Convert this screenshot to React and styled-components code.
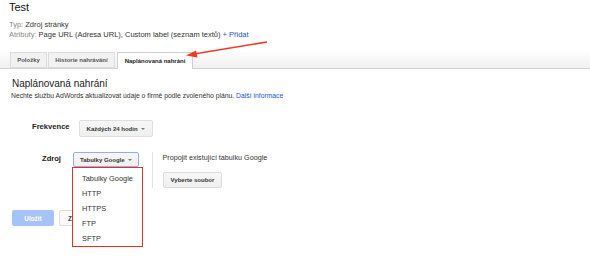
import React from "react";
import styled, { createGlobalStyle } from "styled-components";

const GlobalStyle = createGlobalStyle`
  body {
    margin: 0;
    background: #fff;
    font-family: "Liberation Sans", Arial, sans-serif;
    color: #222;
  }
`;

const tabs = [
  { label: "Položky", width: 37, active: false },
  { label: "Historie nahrávání", width: 67, active: false },
  { label: "Naplánovaná nahrání", width: 76, active: true },
];

const sources = ["Tabulky Google", "HTTP", "HTTPS", "FTP", "SFTP"];

const App = () => {
  return (
    <Page>
      <GlobalStyle />
      <Header>
        <Title>Test</Title>
        <Meta>
          <MetaKey>Typ:</MetaKey> Zdroj stránky
        </Meta>
        <Meta>
          <MetaKey>Atributy:</MetaKey> Page URL (Adresa URL), Custom label
          (seznam textů) <BlueLink>+ Přidat</BlueLink>
        </Meta>
      </Header>

      <TabBar>
        {tabs.map((tab) => (
          <Tab key={tab.label} $active={tab.active} $width={tab.width}>
            {tab.label}
          </Tab>
        ))}
      </TabBar>

      <Content>
        <Heading>Naplánovaná nahrání</Heading>
        <Description>
          Nechte službu AdWords aktualizovat údaje o firmě podle zvoleného
          plánu. <BlueLink>Další informace</BlueLink>
        </Description>

        <FormRow $top={20}>
          <Label $indent={21} $gap={9}>
            Frekvence
          </Label>
          <SelectButton>
            Každých 24 hodin <Caret />
          </SelectButton>
        </FormRow>

        <FormRow $top={15}>
          <Label $indent={31} $gap={12}>
            Zdroj
          </Label>
          <SelectWrap>
            <SelectButton $open>
              Tabulky Google <Caret />
            </SelectButton>
            <Menu>
              {sources.map((s) => (
                <MenuItem key={s}>{s}</MenuItem>
              ))}
            </Menu>
          </SelectWrap>
          <Separator />
          <SidePanel>
            <SideText>Propojit existující tabulku Google</SideText>
            <GrayButton>Vyberte soubor</GrayButton>
          </SidePanel>
        </FormRow>

        <Actions>
          <SaveButton>Uložit</SaveButton>
          <CancelButton>Zrušit</CancelButton>
        </Actions>
      </Content>

      <Arrow width="590" height="276" viewBox="0 0 590 276">
        <line
          x1="267"
          y1="42"
          x2="194"
          y2="54"
          stroke="#f03a26"
          strokeWidth="1.6"
        />
        <polygon points="186,55.5 196,50.5 197.5,57.5" fill="#f03a26" />
      </Arrow>
    </Page>
  );
};

export default App;

const Page = styled.div`
  position: relative;
  width: 590px;
  height: 276px;
  overflow: hidden;
`;

const Header = styled.div`
  padding: 0 9px;
`;

const Title = styled.div`
  font-size: 11px;
  line-height: 14px;
  color: #111;
  margin-bottom: 6px;
`;

const Meta = styled.div`
  font-size: 7.5px;
  line-height: 10px;
  color: #333;
  white-space: nowrap;
`;

const MetaKey = styled.span`
  color: #888;
`;

const BlueLink = styled.span`
  color: #2255cc;
`;

const TabBar = styled.div`
  margin-top: 10px;
  height: 18px;
  display: flex;
  align-items: flex-end;
  gap: 1px;
  padding-left: 10px;
  background: linear-gradient(#ffffff, #f0f0f0);
  border-bottom: 1px solid #d2d2d2;
`;

const Tab = styled.div`
  width: ${(p) => p.$width}px;
  height: ${(p) => (p.$active ? "17px" : "16px")};
  margin-bottom: ${(p) => (p.$active ? "-1px" : "0")};
  margin-left: ${(p) => (p.$active ? "1px" : "0")};
  box-sizing: border-box;
  display: flex;
  align-items: center;
  justify-content: center;
  font-size: 6px;
  font-weight: bold;
  white-space: nowrap;
  color: ${(p) => (p.$active ? "#222" : "#555")};
  background: ${(p) => (p.$active ? "#fff" : "#f1f1f1")};
  border: 1px solid ${(p) => (p.$active ? "#cfcfcf" : "#dcdcdc")};
  border-bottom: ${(p) => (p.$active ? "none" : "1px solid #dcdcdc")};
`;

const Content = styled.div`
  padding: 8px 11px 0;
`;

const Heading = styled.div`
  font-size: 10px;
  line-height: 13px;
  color: #222;
  margin-bottom: 1px;
  padding-left: 1px;
`;

const Description = styled.div`
  font-size: 6.8px;
  line-height: 9px;
  color: #333;
  white-space: nowrap;
`;

const FormRow = styled.div`
  display: flex;
  align-items: flex-start;
  margin-top: ${(p) => p.$top}px;
`;

const Label = styled.div`
  padding-left: ${(p) => p.$indent}px;
  margin-right: ${(p) => p.$gap}px;
  font-size: 7.6px;
  font-weight: bold;
  line-height: 11px;
  padding-top: 1px;
  color: #222;
`;

const SelectWrap = styled.div`
  position: relative;
`;

const SelectButton = styled.div`
  height: ${(p) => (p.$open ? "15px" : "17px")};
  box-sizing: border-box;
  display: flex;
  align-items: center;
  gap: 3px;
  padding: 0 ${(p) => (p.$open ? "6px" : "7px")};
  font-size: 6px;
  font-weight: bold;
  color: #333;
  background: linear-gradient(#f7f7f7, #efefef);
  border: 1px solid ${(p) => (p.$open ? "#8fb0f0" : "#dedede")};
  border-radius: 2px;
  white-space: nowrap;
`;

const Caret = styled.span`
  width: 0;
  height: 0;
  border-left: 2px solid transparent;
  border-right: 2px solid transparent;
  border-top: 2px solid #777;
`;

const Menu = styled.div`
  position: absolute;
  left: -1px;
  top: 15px;
  width: 71px;
  height: 80px;
  box-sizing: border-box;
  border: 1.5px solid #f02c1a;
  background: #fff;
  padding-top: 3px;
  display: flex;
  flex-direction: column;
`;

const MenuItem = styled.div`
  height: 15px;
  display: flex;
  align-items: center;
  padding-left: 9px;
  font-size: 7.4px;
  color: #333;
`;

const Separator = styled.div`
  width: 1px;
  height: 36px;
  background: #e3e3e3;
  margin-left: 13px;
  margin-right: 10px;
`;

const SidePanel = styled.div`
  display: flex;
  flex-direction: column;
  align-items: flex-start;
  gap: 10px;
  padding-top: 1px;
`;

const SideText = styled.div`
  font-size: 7.2px;
  line-height: 9px;
  color: #333;
`;

const GrayButton = styled.div`
  height: 16px;
  box-sizing: border-box;
  display: flex;
  align-items: center;
  padding: 0 7px;
  font-size: 6px;
  font-weight: bold;
  color: #333;
  background: linear-gradient(#f7f7f7, #efefef);
  border: 1px solid #dcdcdc;
  border-radius: 2px;
`;

const Actions = styled.div`
  display: flex;
  gap: 5px;
  margin-top: 22px;
  margin-left: 1px;
`;

const SaveButton = styled.div`
  width: 42px;
  height: 16px;
  display: flex;
  align-items: center;
  justify-content: center;
  font-size: 6.4px;
  font-weight: bold;
  color: #fff;
  background: #a6c3f7;
  border-radius: 2px;
`;

const CancelButton = styled.div`
  height: 16px;
  box-sizing: border-box;
  display: flex;
  align-items: center;
  padding: 0 8px;
  font-size: 6.4px;
  font-weight: bold;
  color: #444;
  background: #fafafa;
  border: 1px solid #dcdcdc;
  border-radius: 2px;
`;

const Arrow = styled.svg`
  position: absolute;
  left: 0;
  top: 0;
  pointer-events: none;
`;
